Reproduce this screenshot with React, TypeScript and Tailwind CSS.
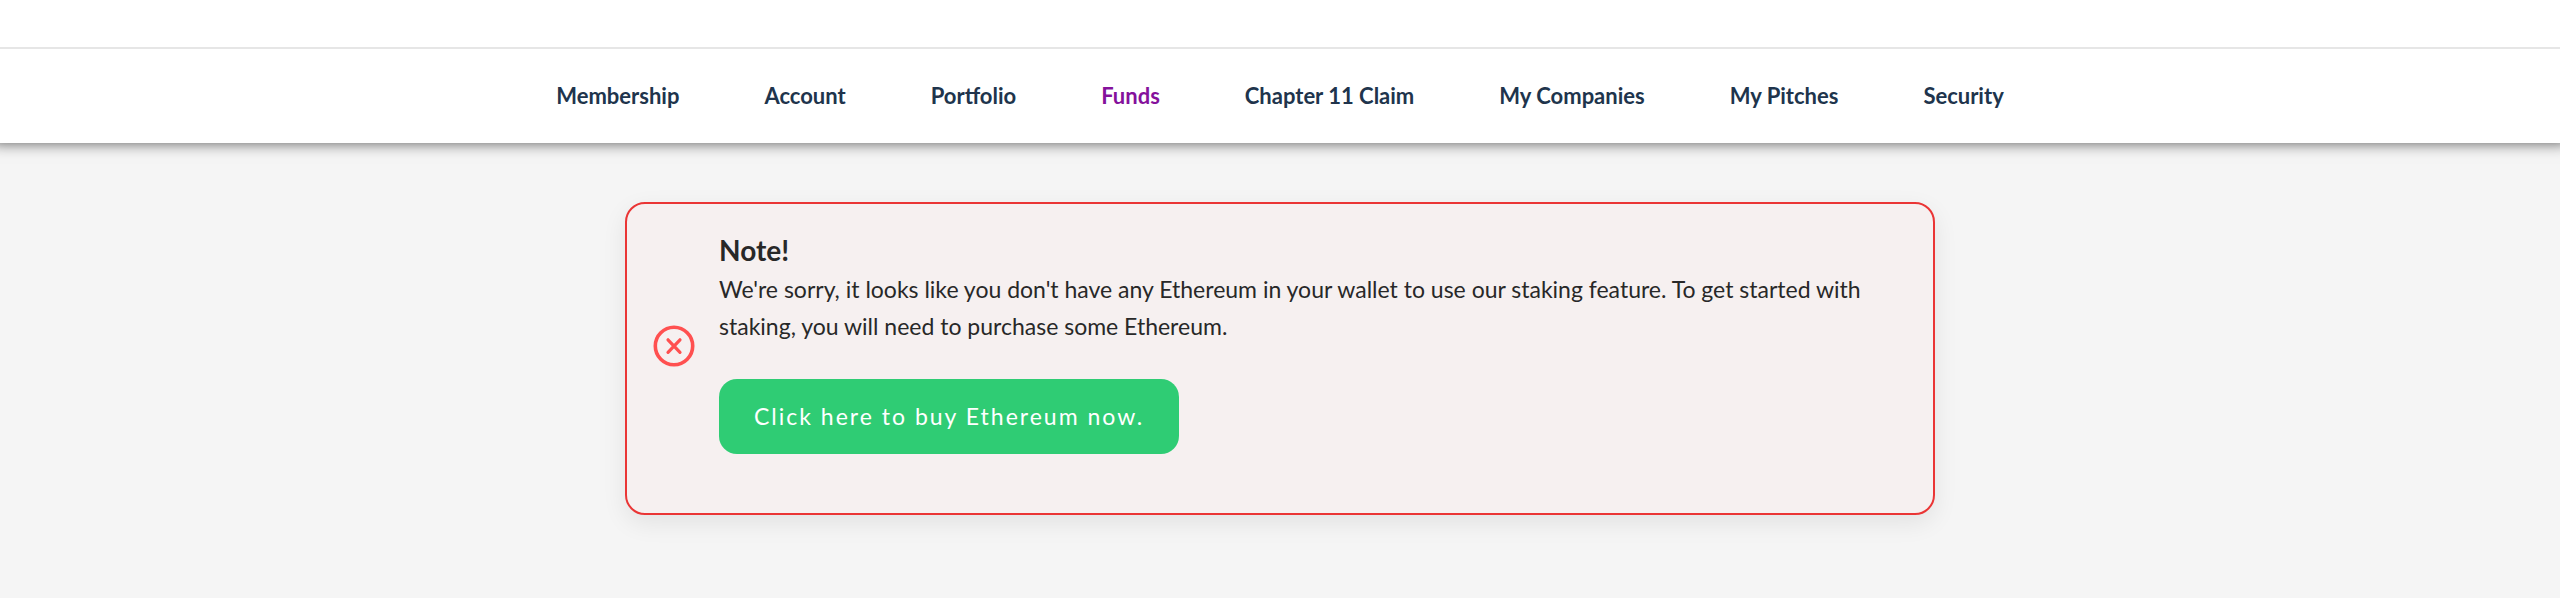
type NavItem = {
  label: string;
  href: string;
};

const NAV_ITEMS: NavItem[] = [
  { label: "Membership", href: "#membership" },
  { label: "Account", href: "#account" },
  { label: "Portfolio", href: "#portfolio" },
  { label: "Funds", href: "#funds" },
  { label: "Chapter 11 Claim", href: "#claim" },
  { label: "My Companies", href: "#companies" },
  { label: "My Pitches", href: "#pitches" },
  { label: "Security", href: "#security" },
];

function NavBar({ active }: { active: string }) {
  return (
    <header className="relative bg-white pt-[47px] shadow-[0_-8px_14px_8px_rgba(0,0,0,0.65)]">
      <nav className="flex flex-wrap justify-center gap-x-[85px] border-t-2 border-[#e6e6e6] py-8">
        {NAV_ITEMS.map((it) => (
          <a
            key={it.label}
            href={it.href}
            aria-current={it.label === active ? "page" : undefined}
            className={
              it.label === active
                ? "text-[22px] leading-[30px] font-bold text-[#85119c]"
                : "text-[22px] leading-[30px] font-bold text-[#20344c]"
            }
          >
            {it.label}
          </a>
        ))}
      </nav>
    </header>
  );
}

function ErrorIcon() {
  return (
    <svg className="size-[42px] shrink-0" viewBox="0 0 42 42" fill="none" stroke="#ff5050" aria-hidden="true">
      <circle cx="21" cy="21" r="18.7" strokeWidth="3.6" />
      <path d="M15 14.8 27 27.4M27 14.8 15 27.4" strokeWidth="3.2" strokeLinecap="round" />
    </svg>
  );
}

export default function App() {
  return (
    <div className="font-['Lato',sans-serif]">
      <NavBar active="Funds" />

      <main className="bg-[#f5f5f5] px-6 pt-[59px] pb-[83px]">
        <section
          role="alert"
          className="mx-auto flex w-full max-w-[1310px] items-center gap-6 rounded-[20px] border-2 border-[#ea3535] bg-[#f6f0f0] pt-[34px] pr-8 pb-[59px] pl-[26px] shadow-[0_8px_24px_rgba(0,0,0,0.08)]"
        >
          <ErrorIcon />

          <div className="text-[23px] leading-[37px] text-[#282828]">
            <h2 className="mb-2 text-[28px] leading-[25px] font-bold">Note!</h2>
            <p>
              We're sorry, it looks like you don't have any Ethereum in your wallet to use our staking feature. To get
              started with staking, you will need to purchase some Ethereum.
            </p>
            <button
              type="button"
              className="mt-[34px] block rounded-[18px] bg-[#2fcc74] px-[35px] py-[19px] tracking-[2px] text-white"
            >
              Click here to buy Ethereum now.
            </button>
          </div>
        </section>
      </main>
    </div>
  );
}
